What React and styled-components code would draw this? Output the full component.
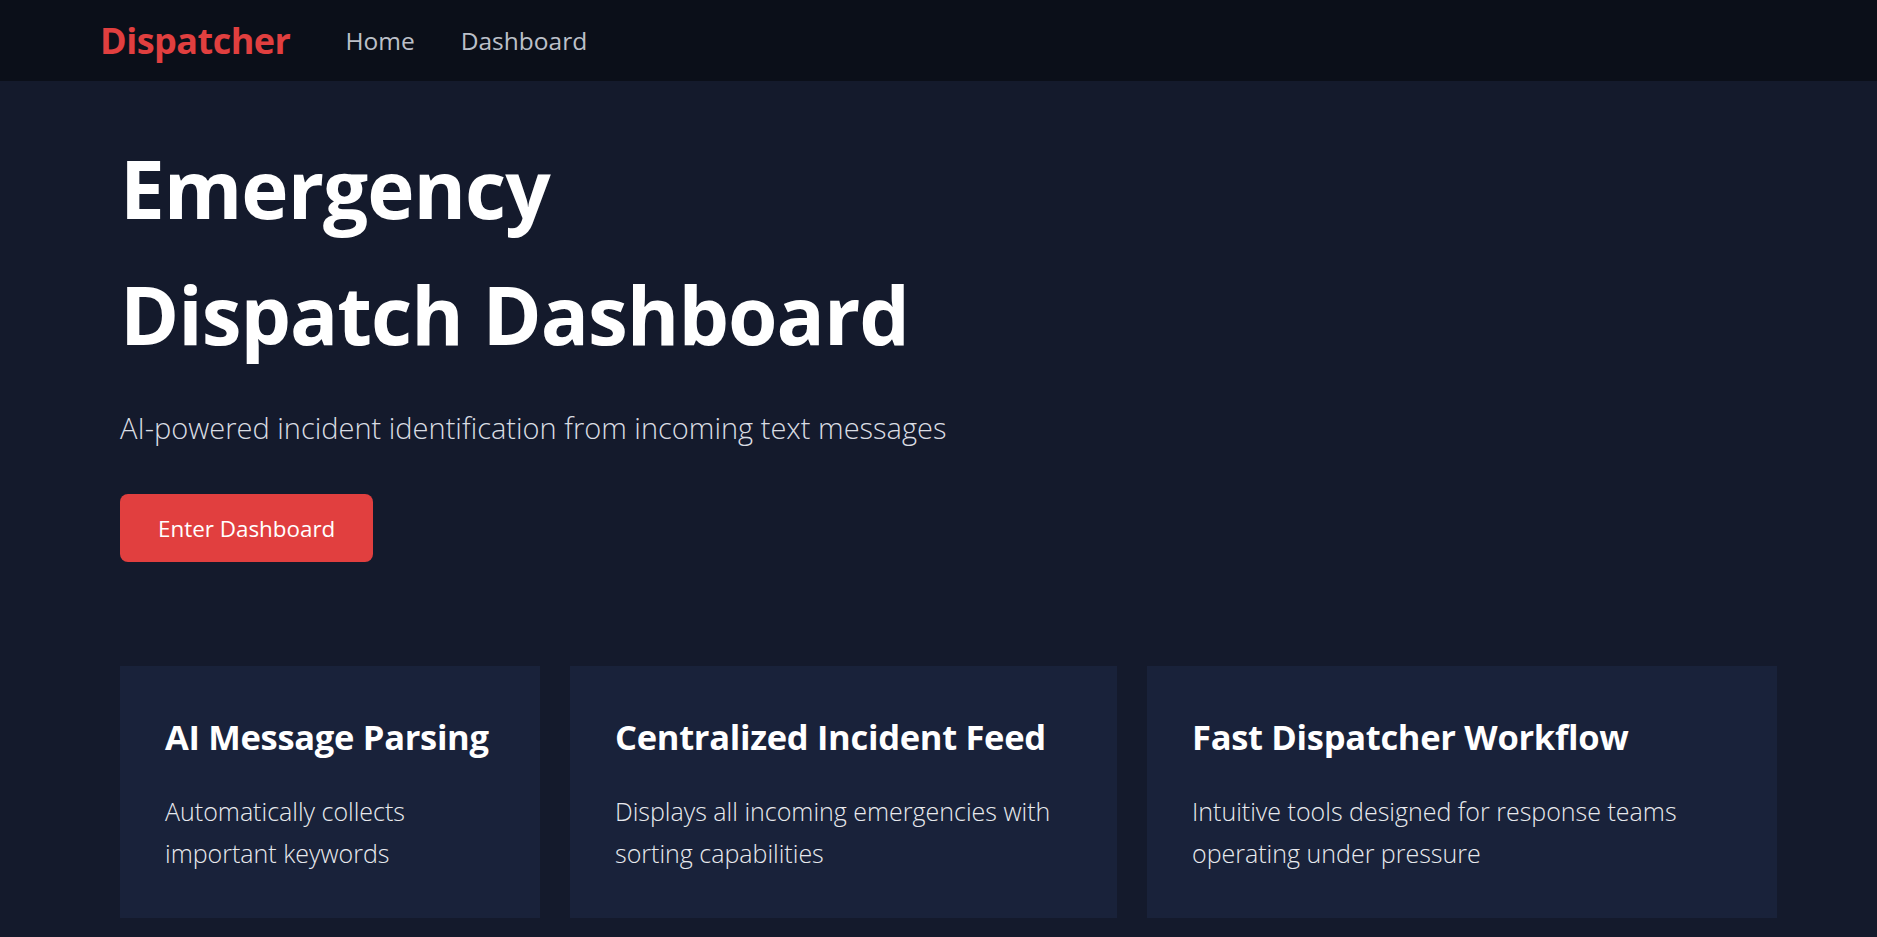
import React from "react";
import styled, { createGlobalStyle } from "styled-components";

const GlobalStyle = createGlobalStyle`
  * { box-sizing: border-box; }
  body {
    margin: 0;
    background: #141a2c;
    color: #ffffff;
    font-family: "Open Sans", "Noto Sans", sans-serif;
  }
`;

const NavBar = styled.nav`
  height: 81px;
  background: #0b0f19;
  display: flex;
  align-items: center;
  padding-left: 100px;
`;

const Logo = styled.a`
  font-size: 36px;
  font-weight: 700;
  color: #e13f3f;
  text-decoration: none;
  margin-right: 55px;
  letter-spacing: -0.5px;
`;

const NavLink = styled.a`
  font-size: 24.5px;
  color: #bcc0c9;
  text-decoration: none;
  margin-right: 46px;
`;

const Hero = styled.main`
  padding: 44px 120px 0;
`;

const Title = styled.h1`
  margin: 0;
  font-size: 80px;
  line-height: 126px;
  font-weight: 700;
  letter-spacing: -1px;
`;

const Subtitle = styled.p`
  margin: 30px 0 0;
  font-size: 29px;
  line-height: 42px;
  font-weight: 300;
  color: #dadde3;
`;

const PrimaryButton = styled.button`
  margin-top: 45px;
  height: 68px;
  padding: 0 38px;
  border: none;
  border-radius: 8px;
  background: #e13f3f;
  color: #ffffff;
  font-family: inherit;
  font-size: 22.4px;
  cursor: pointer;
`;

const Features = styled.section`
  margin-top: 104px;
  display: grid;
  grid-template-columns: 420px 547px 630px;
  gap: 30px;
`;

const Card = styled.div`
  background: #19223a;
  height: 252px;
  padding: 52px 45px 44px;
`;

const CardTitle = styled.h3`
  margin: 0;
  font-size: 34.5px;
  line-height: 38px;
  font-weight: 700;
  letter-spacing: -0.3px;
`;

const CardText = styled.p`
  margin: 34px 0 0;
  font-size: 25px;
  line-height: 42px;
  font-weight: 300;
  color: #e8eaee;
`;

const features = [
  {
    title: "AI Message Parsing",
    text: ["Automatically collects", "important keywords"],
  },
  {
    title: "Centralized Incident Feed",
    text: ["Displays all incoming emergencies with", "sorting capabilities"],
  },
  {
    title: "Fast Dispatcher Workflow",
    text: ["Intuitive tools designed for response teams", "operating under pressure"],
  },
];

export default function App() {
  return (
    <>
      <GlobalStyle />
      <NavBar>
        <Logo href="#">Dispatcher</Logo>
        <NavLink href="#">Home</NavLink>
        <NavLink href="#">Dashboard</NavLink>
      </NavBar>
      <Hero>
        <Title>
          Emergency
          <br />
          Dispatch Dashboard
        </Title>
        <Subtitle>AI-powered incident identification from incoming text messages</Subtitle>
        <PrimaryButton>Enter Dashboard</PrimaryButton>
        <Features>
          {features.map((f) => (
            <Card key={f.title}>
              <CardTitle>{f.title}</CardTitle>
              <CardText>
                {f.text[0]}
                <br />
                {f.text[1]}
              </CardText>
            </Card>
          ))}
        </Features>
      </Hero>
    </>
  );
}
